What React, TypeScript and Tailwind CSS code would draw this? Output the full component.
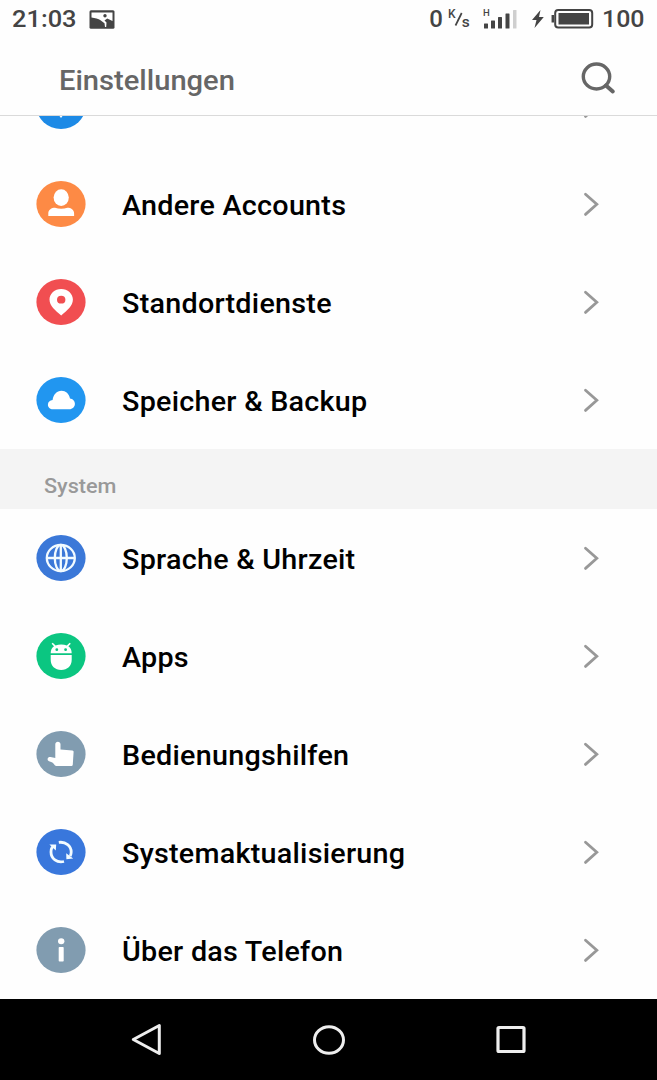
import type { ReactNode } from "react";

type Entry = {
  label: string;
  color: string;
  icon: ReactNode;
  labelClass?: string;
};

const Badge = ({ color, children }: { color: string; children: ReactNode }) => (
  <svg
    className={`h-[46px] w-[50px] shrink-0 ${color}`}
    viewBox="0 0 50 46"
    preserveAspectRatio="none"
  >
    <ellipse cx="25" cy="23" rx="24.6" ry="22.9" fill="currentColor" />
    {children}
  </svg>
);

const accounts: Entry[] = [
  {
    label: "Andere Accounts",
    color: "text-[#fd8a45]",
    icon: (
      <g fill="#fff">
        <ellipse cx="25.2" cy="16.6" rx="7.6" ry="8.4" />
        <path d="M12.300 34.900v-2.400c0-4 3.200-5.600 6.700-5.700 2 .7 4 1 6.200 1s4.200-.3 6.200-1c3.500.1 6.700 1.700 6.700 5.700v2.400z" />
      </g>
    ),
  },
  {
    label: "Standortdienste",
    color: "text-[#f14e51]",
    icon: (
      <path
        fill="#fff"
        fillRule="evenodd"
        d="M25.200 10c-6.500 0-11.700 4.700-11.700 10.600 0 6.300 5.700 10.800 11.700 15.900 6-5.100 11.700-9.600 11.700-15.900C36.900 14.700 31.700 10 25.200 10zm0 6.800a4.200 3.900 0 1 1 0 7.800 4.200 3.900 0 0 1 0-7.800z"
      />
    ),
  },
  {
    label: "Speicher & Backup",
    color: "text-[#2196f0]",
    icon: (
      <path
        fill="#fff"
        d="M16.900 32.200c-2.900 0-5-1.900-5-4.500 0-2.500 2-4.400 4.700-4.600.5-5.200 4.200-9.300 8.900-9.300 4.300 0 7.600 3.100 8.500 7.600 2.700.3 4.900 2.500 4.900 5.300 0 3.100-2.400 5.500-5.600 5.500z"
      />
    ),
  },
];

const system: Entry[] = [
  {
    label: "Sprache & Uhrzeit",
    color: "text-[#3b78d8]",
    icon: (
      <g fill="none" stroke="#f2fbff" strokeWidth="2.3">
        <ellipse cx="24.8" cy="23" rx="14" ry="13.1" />
        <ellipse cx="24.8" cy="23" rx="6" ry="13.1" />
        <path d="M11 23h28M24.800 10v26" />
      </g>
    ),
  },
  {
    label: "Apps",
    color: "text-[#0bc681]",
    icon: (
      <>
        <path
          fill="#fff"
          d="M14.700 20.200c0-3.300 1.200-5.500 3.300-6.900l-2.400-2.500 1.100-1 2.900 2.600c1.600-.7 3.500-1 5.600-1s4 .3 5.600 1l2.900-2.600 1.100 1-2.400 2.500c2.100 1.400 3.300 3.600 3.300 6.900zM14.700 22.100h21v4.700c0 6-4.300 10.300-10.500 10.300s-10.500-4.300-10.500-10.300z"
        />
        <circle cx="20.8" cy="16.7" r="1.4" fill="currentColor" />
        <circle cx="29.6" cy="16.7" r="1.4" fill="currentColor" />
      </>
    ),
  },
  {
    label: "Bedienungshilfen",
    color: "text-[#819cb0]",
    icon: (
      <path
        fill="#fff"
        d="M19.300 13.300c0-1.500 1.100-2.600 2.600-2.600s2.600 1.100 2.600 2.600v5.300l11.900.9c.8.100 1.300.6 1.200 1.400l-.8 12.600c-.1 1-.8 1.600-1.800 1.600H20.900c-1 0-1.700-.3-2.300-1.100-.9-1.300-1.800-2.400-3.400-3l-2.200-.8c-1.300-.5-1.700-1.800-1.200-2.900.5-1 1.600-1.400 2.800-1.200l4.700.8z"
      />
    ),
  },
  {
    label: "Systemaktualisierung",
    color: "text-[#3977dc]",
    icon: (
      <>
        <g fill="none" stroke="#f2fbff" strokeWidth="2.8">
          <path d="M22.800 13.400c7-1 12.400 3.600 12.400 9.600 0 1.500-.3 2.800-1 4.200" />
          <path d="M28 32.500c-7 1.700-13-2.800-13-9.500 0-2 .5-3.700 1.400-5.200" />
        </g>
        <path fill="#f2fbff" d="M13.400 15.600l6.800-.1-.4 5.900zM37.200 29.600l-6.800.7-.2-6z" />
      </>
    ),
  },
  {
    label: "Über das Telefon",
    color: "text-[#819cb0]",
    icon: (
      <g fill="#fff">
        <ellipse cx="25.2" cy="14.3" rx="3.2" ry="3" />
        <rect x="22.7" y="20" width="5" height="14.5" rx=".8" />
      </g>
    ),
  },
];

const Row = ({ label, color, icon, labelClass = "pt-[4px]" }: Entry) => (
  <li className="flex h-[98px] shrink-0 items-center pr-[57px] pl-[36px]">
    <Badge color={color}>{icon}</Badge>
    <span
      className={`ml-[36px] flex-1 origin-left scale-x-[1.063] text-[27px] leading-none font-medium tracking-[0.25px] whitespace-nowrap text-black ${labelClass}`}
    >
      {label}
    </span>
    <svg className="h-[26px] w-[17px]" viewBox="0 0 17 26" fill="none">
      <path
        d="M2.500 3.200l11.300 10.100L2.500 23.400"
        stroke="#989898"
        strokeWidth="2.8"
        strokeLinecap="round"
      />
    </svg>
  </li>
);

const StatusBar = () => (
  <div className="flex h-[38px] items-center pr-[12px] pl-[12px] text-[#444]">
    <span className="w-[77px] text-[24px] leading-none font-medium">
      <span className="inline-block origin-left scale-x-[1.06]">21:03</span>
    </span>
    <svg className="h-[19px] w-[26px]" viewBox="0 0 26 19">
      <rect x=".5" y=".2" width="25" height="18.5" rx="1.5" fill="currentColor" />
      <path
        fill="#fff"
        d="M2.500 2.500h21v8.500l-5.300-2.500-2.700 2 2 2-.3 4.500h-1.200l-.5-3.700-4-3C9.500 9 6 7.800 2.500 7.500z"
      />
      <circle cx="16" cy="5.8" r="1.7" fill="currentColor" />
    </svg>
    <div className="ml-auto flex items-center">
      <span className="text-[24px] leading-none font-medium">0</span>
      <svg className="ml-[5px] h-[22px] w-[26px]" viewBox="0 0 26 22" fill="currentColor">
        <text x="0" y="9.5" fontSize="12" fontWeight="500">
          K
        </text>
        <path d="M7.500 17.500L13.700 5" stroke="currentColor" strokeWidth="1.7" />
        <text x="13.8" y="19" fontSize="15.5" fontWeight="500">
          s
        </text>
      </svg>
      <svg className="ml-[9px] h-[22px] w-[36px]" viewBox="0 0 36 22" fill="currentColor">
        <text x="0" y="7.8" fontSize="9.5" fontWeight="500">
          H
        </text>
        <rect x="1" y="15.5" width="4" height="5" rx=".5" />
        <rect x="8" y="12.5" width="4" height="8" rx=".5" />
        <rect x="15" y="9" width="4" height="11.5" rx=".5" />
        <rect x="22.5" y="5.5" width="4" height="15" rx=".5" />
        <rect x="30" y="2" width="3.5" height="18.5" rx=".5" fill="#cfcfcf" />
      </svg>
      <svg className="ml-[12px] h-[18px] w-[13px]" viewBox="0 0 13 18" fill="currentColor">
        <path d="M9.500 0L1 10h4.500L3.500 18 12.800 7H8z" />
      </svg>
      <svg className="ml-[7px] h-[20px] w-[43px]" viewBox="0 0 43 20" fill="none">
        <rect x="4.2" y="1" width="37" height="17.5" rx="3" stroke="currentColor" strokeWidth="2" />
        <path d="M1.800 6v7.500" stroke="currentColor" strokeWidth="2.5" />
        <rect x="7.5" y="4" width="30.5" height="11.5" fill="currentColor" />
      </svg>
      <span className="ml-[8px] w-[43px] text-[24px] leading-none font-medium">
        <span className="inline-block origin-left scale-x-[1.04]">100</span>
      </span>
    </div>
  </div>
);

const App = () => {
  return (
    <div className="flex h-[1080px] w-[657px] flex-col overflow-hidden bg-[#fefefe] font-['Roboto',sans-serif]">
      <header className="flex h-[116px] shrink-0 flex-col border-b border-[#dadada]">
        <StatusBar />
        <div className="flex flex-1 items-center justify-between pr-[41px] pl-[58.5px]">
          <h1 className="origin-left scale-x-[1.04] pt-[8px] text-[28px] leading-none font-medium text-[#666]">
            Einstellungen
          </h1>
          <svg className="mt-[2px] h-[34px] w-[36px]" viewBox="0 0 36 34" fill="none">
            <ellipse cx="16.5" cy="15.5" rx="13.2" ry="12.5" stroke="#666" strokeWidth="3.4" />
            <path d="M26 24.500l6.800 6" stroke="#666" strokeWidth="4" strokeLinecap="round" />
          </svg>
        </div>
      </header>
      <main className="flex flex-1 flex-col">
        <ul className="flex h-[333px] flex-col justify-end overflow-hidden">
          <Row
            label="Meizu-Konto"
            color="text-[#1d8ae6]"
            labelClass="pt-[3px]"
            icon={<path d="M25 35l-9-12 9-10 9 10z" fill="#fff" />}
          />
          {accounts.map((entry) => (
            <Row key={entry.label} {...entry} />
          ))}
        </ul>
        <div className="flex h-[60px] items-end bg-[#f4f4f4] pb-[12px] pl-[44px]">
          <h2 className="origin-left scale-x-[1.03] text-[21px] leading-none font-medium text-[#999]">
            System
          </h2>
        </div>
        <ul>
          {system.map((entry) => (
            <Row key={entry.label} {...entry} />
          ))}
        </ul>
      </main>
      <nav className="flex h-[81px] shrink-0 items-center justify-between bg-black pr-[130px] pl-[130px]">
        <svg className="h-[34px] w-[34px]" viewBox="0 0 34 34" fill="none">
          <path
            d="M3.300 16.500L29.300 2.500v28z"
            stroke="#eee"
            strokeWidth="3"
            strokeLinejoin="round"
          />
        </svg>
        <svg className="h-[34px] w-[34px]" viewBox="0 0 34 34" fill="none">
          <ellipse cx="17" cy="17" rx="14.5" ry="13.3" stroke="#eee" strokeWidth="3" />
        </svg>
        <svg className="h-[34px] w-[34px]" viewBox="0 0 34 34" fill="none">
          <rect x="5" y="4.5" width="26" height="24" rx="1" stroke="#eee" strokeWidth="3.2" />
        </svg>
      </nav>
    </div>
  );
};

export default App;
